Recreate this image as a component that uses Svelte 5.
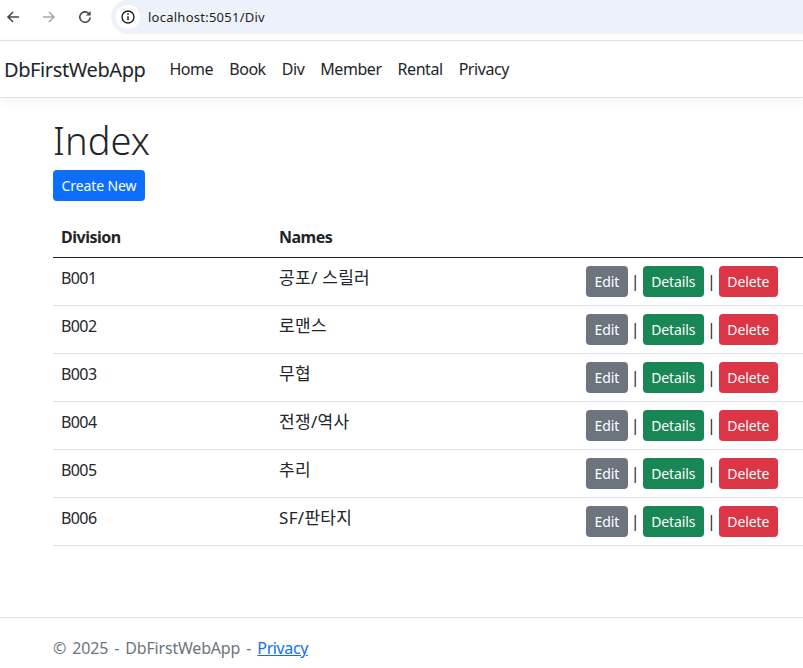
<script>
  const rows = [
    { id: 'B001', name: '공포/ 스릴러' },
    { id: 'B002', name: '로맨스' },
    { id: 'B003', name: '무협' },
    { id: 'B004', name: '전쟁/역사' },
    { id: 'B005', name: '추리' },
    { id: 'B006', name: 'SF/판타지' }
  ];
  const links = ['Home', 'Book', 'Div', 'Member', 'Rental', 'Privacy'];
</script>

<div class="chrome">
  <svg class="ic" viewBox="0 0 16 16"><path d="M14 8H3M8 3 3 8l5 5" fill="none" stroke="#474747" stroke-width="1.6"/></svg>
  <svg class="ic" viewBox="0 0 16 16"><path d="M2 8h11M8 3l5 5-5 5" fill="none" stroke="#a9a9a9" stroke-width="1.6"/></svg>
  <svg class="ic" viewBox="0 0 16 16"><path d="M13.2 8.4A5.2 5.2 0 1 1 11.6 4.3" fill="none" stroke="#474747" stroke-width="1.6"/><path d="M13.6 2v4.6H9z" fill="#474747"/></svg>
  <div class="omnibox">
    <span class="info">
      <svg viewBox="0 0 16 16" width="16" height="16"><circle cx="8" cy="8" r="6" fill="none" stroke="#1f1f1f" stroke-width="1.4"/><path d="M8 7.2v4" stroke="#1f1f1f" stroke-width="1.5"/><circle cx="8" cy="5.1" r=".9" fill="#1f1f1f"/></svg>
    </span>
    <span class="url">localhost:5051/Div</span>
  </div>
</div>

<nav class="navbar">
  <span class="brand">DbFirstWebApp</span>
  {#each links as link}
    <span class="nav-link">{link}</span>
  {/each}
</nav>

<main>
  <h1>Index</h1>
  <a class="btn primary" href="#top">Create New</a>
  <table>
    <thead>
      <tr><th class="c1">Division</th><th class="c2">Names</th><th></th></tr>
    </thead>
    <tbody>
      {#each rows as row}
        <tr>
          <td>{row.id}</td>
          <td class="name">{row.name}</td>
          <td class="actions">
            <a class="btn secondary" href="#top">Edit</a> <span class="sep">|</span>
            <a class="btn success" href="#top">Details</a> <span class="sep">|</span>
            <a class="btn danger" href="#top">Delete</a>
          </td>
        </tr>
      {/each}
    </tbody>
  </table>
</main>

<footer>© 2025 - DbFirstWebApp - <a href="#top">Privacy</a></footer>

<style>
  :global(body) {
    font-family: "Noto Sans", "Noto Sans CJK KR", sans-serif;
    color: #212529;
    background: #fff;
    overflow: hidden;
  }

  .chrome {
    height: 41px;
    box-sizing: border-box;
    display: flex;
    align-items: center;
    gap: 20px;
    padding-left: 5px;
    padding-bottom: 6px;
    border-bottom: 1px solid #e3e3e3;
  }
  .ic { width: 16px; height: 16px; }
  .omnibox {
    flex: 1;
    height: 34px;
    margin-left: -2px;
    background: #edf2fa;
    border-radius: 17px 0 0 17px;
    display: flex;
    align-items: center;
    padding-left: 5px;
  }
  .info {
    width: 24px;
    height: 24px;
    border-radius: 50%;
    background: #fff;
    display: flex;
    align-items: center;
    justify-content: center;
    margin-right: 8px;
  }
  .url { font-size: 13px; color: #1f1f1f; letter-spacing: 0.25px; }

  .navbar {
    height: 57px;
    box-sizing: border-box;
    display: flex;
    align-items: center;
    padding-left: 4px;
    border-bottom: 1px solid #dee2e6;
    box-shadow: 0 4px 14px rgba(0, 0, 0, 0.05);
  }
  .brand { font-size: 20px; margin-right: 16px; letter-spacing: -0.4px; }
  .nav-link { font-size: 16px; padding: 0 8px; letter-spacing: -0.45px; }

  main { padding: 18px 0 0 53px; height: 519px; box-sizing: border-box; }
  h1 { margin: 0 0 6px; font-size: 38px; font-weight: 300; line-height: 48px; letter-spacing: 0.1px; }

  .btn {
    display: inline-block;
    box-sizing: border-box;
    height: 31px;
    padding: 0 8.5px;
    line-height: 31px;
    font-size: 14px;
    color: #fff;
    border-radius: 4px;
    text-decoration: none;
    letter-spacing: -0.1px;
  }
  .primary { background: #0d6efd; }
  .secondary { background: #6c757d; }
  .success { background: #198754; }
  .danger { background: #dc3545; }

  table {
    width: 750px;
    margin-top: 16px;
    border-collapse: collapse;
    table-layout: fixed;
    font-size: 16px;
  }
  th {
    text-align: left;
    font-weight: 700;
    padding: 8px;
    height: 40px;
    box-sizing: border-box;
    border-bottom: 1px solid #212529;
    letter-spacing: -0.5px;
  }
  .c1 { width: 218px; }
  .c2 { width: 307px; }
  td {
    padding: 8px;
    height: 48px;
    box-sizing: border-box;
    vertical-align: top;
    border-bottom: 1px solid #dee2e6;
    line-height: 24px;
    letter-spacing: -0.6px;
  }
  td.name { font-size: 17px; letter-spacing: 0.3px; }
  .actions { white-space: nowrap; }
  .sep { margin: 0 -0.5px; letter-spacing: 0; }

  footer {
    border-top: 1px solid #dee2e6;
    height: 51px;
    padding-left: 53px;
    line-height: 60px;
    font-size: 16px;
    color: #6c757d;
    letter-spacing: -0.2px;
    word-spacing: 2.2px;
  }
  footer a { color: #0d6efd; letter-spacing: -0.4px; }
</style>
